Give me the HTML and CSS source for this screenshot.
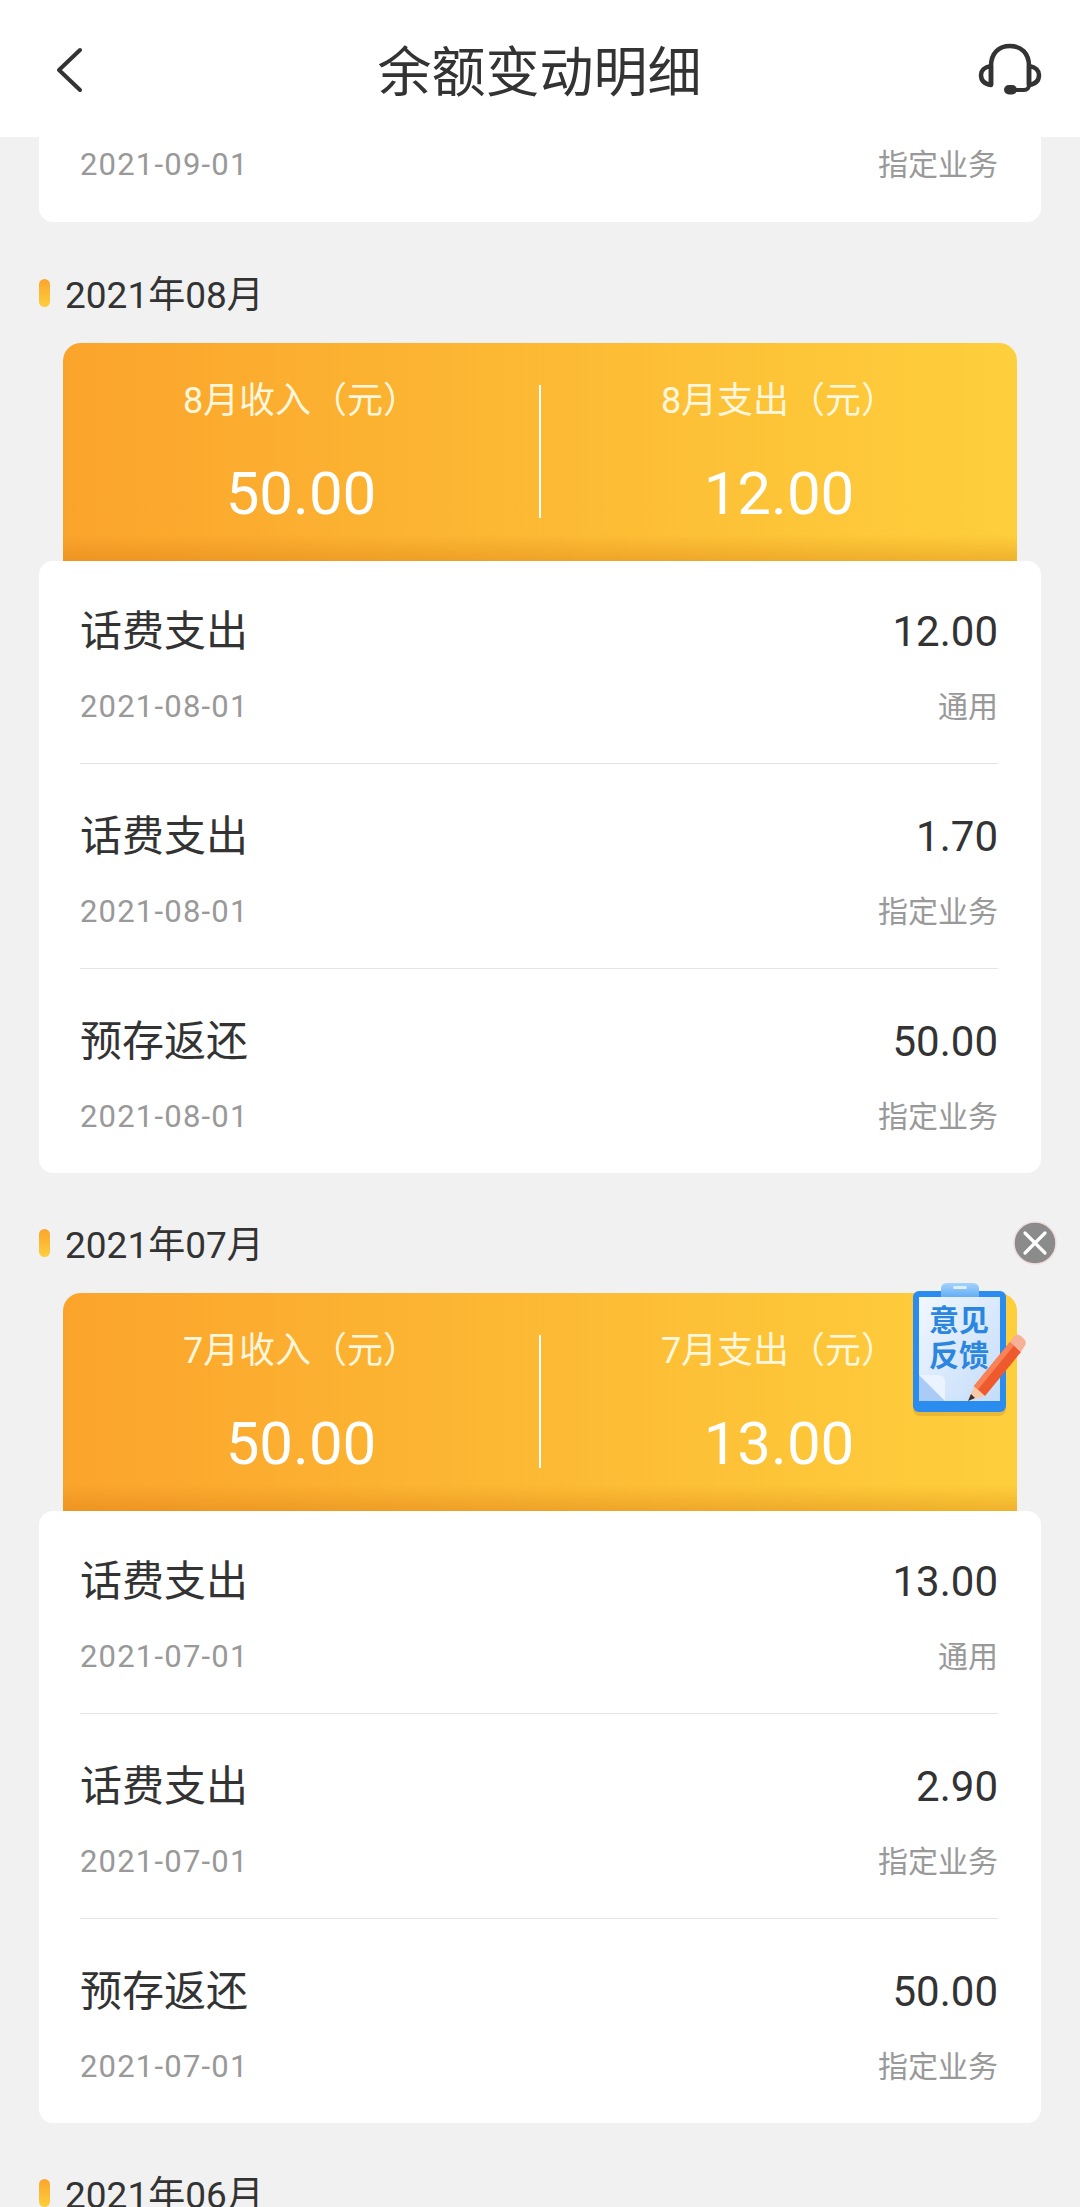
FILE: index.html
```html
<!DOCTYPE html>
<html lang="zh-CN">
<head>
    <meta charset="UTF-8">
    <meta name="viewport" content="width=device-width, initial-scale=1.0">
    <title>余额变动明细</title>
    <link rel="stylesheet" href="styles.css">
</head>
<body>

<!-- Top bar -->
<header class="top-bar">
    <svg class="back-icon" viewBox="0 0 30 46" width="30" height="46">
        <path d="M26 3 L5 23 L26 43" fill="none" stroke="#333" stroke-width="4" stroke-linecap="round" stroke-linejoin="round"/>
    </svg>
    <h1>余额变动明细</h1>
    <svg class="service-icon" viewBox="0 0 64 54" width="64" height="54">
        <path d="M13 42 V23 C13 10 21 3 32 3 C43 3 51 10 51 23 V42" fill="none" stroke="#333" stroke-width="4.5"/>
        <path d="M13 23 C6 24 3 28 3 32 C3 37 6 41 13 42 Z" fill="none" stroke="#333" stroke-width="4.5" stroke-linejoin="round"/>
        <path d="M51 23 C58 24 61 28 61 32 C61 37 58 41 51 42 Z" fill="none" stroke="#333" stroke-width="4.5" stroke-linejoin="round"/>
        <path d="M34 47 H46 C49 47 51 45 51 42" fill="none" stroke="#333" stroke-width="4"/>
        <rect x="26" y="42" width="13" height="9.5" rx="4.7" fill="#333"/>
    </svg>
</header>

<main class="list">

    <!-- Previous month, scrolled under the top bar -->
    <div class="card card-cut">
        <div class="row-foot">
            <span class="date">2021-09-01</span>
            <span class="tag">指定业务</span>
        </div>
    </div>

    <section class="month">
        <h2 class="month-title">2021年08月</h2>
        <div class="banner">
            <div class="banner-col">
                <p class="banner-label">8月收入（元）</p>
                <p class="banner-value">50.00</p>
            </div>
            <div class="banner-col">
                <p class="banner-label">8月支出（元）</p>
                <p class="banner-value">12.00</p>
            </div>
        </div>
        <div class="card">
            <div class="row">
                <div class="row-head"><span class="row-name">话费支出</span><span class="row-amount">12.00</span></div>
                <div class="row-foot"><span class="date">2021-08-01</span><span class="tag">通用</span></div>
            </div>
            <div class="row">
                <div class="row-head"><span class="row-name">话费支出</span><span class="row-amount">1.70</span></div>
                <div class="row-foot"><span class="date">2021-08-01</span><span class="tag">指定业务</span></div>
            </div>
            <div class="row">
                <div class="row-head"><span class="row-name">预存返还</span><span class="row-amount">50.00</span></div>
                <div class="row-foot"><span class="date">2021-08-01</span><span class="tag">指定业务</span></div>
            </div>
        </div>
    </section>

    <section class="month">
        <h2 class="month-title">2021年07月</h2>
        <div class="banner">
            <div class="banner-col">
                <p class="banner-label">7月收入（元）</p>
                <p class="banner-value">50.00</p>
            </div>
            <div class="banner-col">
                <p class="banner-label">7月支出（元）</p>
                <p class="banner-value">13.00</p>
            </div>
        </div>
        <div class="card">
            <div class="row">
                <div class="row-head"><span class="row-name">话费支出</span><span class="row-amount">13.00</span></div>
                <div class="row-foot"><span class="date">2021-07-01</span><span class="tag">通用</span></div>
            </div>
            <div class="row">
                <div class="row-head"><span class="row-name">话费支出</span><span class="row-amount">2.90</span></div>
                <div class="row-foot"><span class="date">2021-07-01</span><span class="tag">指定业务</span></div>
            </div>
            <div class="row">
                <div class="row-head"><span class="row-name">预存返还</span><span class="row-amount">50.00</span></div>
                <div class="row-foot"><span class="date">2021-07-01</span><span class="tag">指定业务</span></div>
            </div>
        </div>
    </section>

    <section class="month">
        <h2 class="month-title">2021年06月</h2>
    </section>
</main>

<!-- Floating feedback button -->
<svg class="feedback-close" viewBox="0 0 46 46" width="46" height="46">
    <circle cx="23" cy="23" r="21" fill="#8b8b8b" stroke="#f0dcdc" stroke-width="1.5"/>
    <path d="M13 13 L33 33 M33 13 L13 33" stroke="#fff" stroke-width="3.2" stroke-linecap="round"/>
</svg>

<svg class="feedback" viewBox="905 1278 125 142" width="125" height="142">
    <defs>
        <linearGradient id="paper" x1="0" y1="0" x2="1" y2="1">
            <stop offset="0" stop-color="#f1f7ff"/>
            <stop offset="1" stop-color="#c4dcf9"/>
        </linearGradient>
        <linearGradient id="clip" x1="0" y1="0" x2="0" y2="1">
            <stop offset="0" stop-color="#a5d3fb"/>
            <stop offset="1" stop-color="#62aef5"/>
        </linearGradient>
    </defs>
    <rect x="913" y="1294" width="93" height="122" rx="7" fill="#b98a30" opacity=".3"/>
    <rect x="913" y="1291" width="93" height="121" rx="6" fill="#2b8cf0"/>
    <path d="M941 1297 V1289 Q941 1283 947 1283 H973 Q979 1283 979 1289 V1297 Z" fill="url(#clip)"/>
    <rect x="953" y="1286" width="14" height="3" rx="1.5" fill="#dcefff"/>
    <rect x="919" y="1297" width="81" height="104" fill="url(#paper)"/>
    <path d="M919 1375 H938 Q945 1375 945 1382 V1401 H941 Z" fill="#eaf3ff"/>
    <path d="M919 1375 L945 1401 H919 Z" fill="#a9cbf6"/>
    <text x="929" y="1331" class="feedback-text">意见</text>
    <text x="929" y="1366" class="feedback-text">反馈</text>
    <path d="M968 1401 L974 1386 L985 1396 Z" fill="#f8c9a8"/>
    <path d="M968 1401 L971 1394 L975 1398 Z" fill="#333"/>
    <path d="M974 1386 L1010 1342 L1021 1352 L985 1396 Z" fill="#ee5a2e"/>
    <path d="M974 1386 L1010 1342 L1014 1345.600 L978 1389.600 Z" fill="#f98257"/>
    <path d="M1010 1342 L1014 1336 Q1017 1333 1021 1336 L1025 1340 Q1027 1344 1024 1347 L1021 1352 Z" fill="#f6b196"/>
</svg>

</body>
</html>
```

FILE: styles.css
```css
* {
    box-sizing: border-box;
}

html, body {
    margin: 0;
    height: 2207px;
    overflow: hidden;
}

body {
    position: relative;
    font-family: Roboto, "Noto Sans CJK SC", sans-serif;
    background-color: #f1f1f1;
    color: #333;
}

p, h1, h2 {
    margin: 0;
    font-weight: normal;
}

.top-bar {
    display: flex;
    justify-content: space-between;
    align-items: center;
    height: 137px;
    padding: 2px 38px 0 54px;
    background-color: white;
}

.top-bar h1 {
    font-size: 54px;
    line-height: 70px;
    margin-left: 17px;
    padding-top: 8px;
}

.back-icon {
    display: block;
}

.service-icon {
    display: block;
}

.list {
    padding: 0 39px;
}

.month {
    padding-top: 45px;
}

.card-cut + .month {
    padding-top: 46px;
}

.month-title {
    display: flex;
    align-items: center;
    height: 50px;
    padding-bottom: 3px;
    font-size: 37px;
}

.month-title::before {
    content: "";
    width: 11px;
    height: 28px;
    margin-top: 3px;
    margin-right: 15px;
    border-radius: 6px;
    background: linear-gradient(to bottom, #fba42c, #fecf3c);
}

.banner {
    display: flex;
    height: 218px;
    margin: 25px 24px 0;
    padding-top: 42px;
    border-radius: 18px 18px 0 0;
    background:
        linear-gradient(to bottom, rgba(205, 110, 10, 0) 88%, rgba(205, 110, 10, 0.3) 100%),
        linear-gradient(to right, #fba42c, #fecf3c);
}

.banner-col {
    flex: 1;
    height: 133px;
    text-align: center;
    color: #fff;
}

.banner-col:first-child {
    border-right: 2px solid #fff;
}

.banner-label {
    font-size: 36px;
    line-height: 32px;
    color: #fff7dc;
}

.banner-value {
    margin-top: 42px;
    font-size: 60px;
    line-height: 70px;
}

.card {
    padding: 0 43px 0 41px;
    border-radius: 14px;
    background-color: white;
}

.card-cut {
    padding-top: 7px;
    padding-bottom: 38px;
    border-radius: 0 0 14px 14px;
}

.row {
    height: 205px;
    padding-top: 43px;
    border-bottom: 1px solid #e4e4e4;
}

.row:first-child {
    height: 203px;
    padding-top: 41px;
}

.row:last-child {
    height: 204px;
    border-bottom: none;
}

.row-head {
    display: flex;
    justify-content: space-between;
    align-items: center;
    height: 60px;
}

.row-name {
    font-size: 42px;
    padding-bottom: 10px;
}

.row-amount {
    font-size: 42px;
    padding-bottom: 2px;
}

.row-foot {
    display: flex;
    justify-content: space-between;
    align-items: center;
    height: 40px;
    font-size: 30px;
    color: #999;
}

.row .row-foot {
    margin-top: 24px;
}

.date {
    font-size: 31px;
    letter-spacing: 1.2px;
}

.tag {
    padding-bottom: 5px;
}

.feedback-close {
    position: absolute;
    left: 1012px;
    top: 1220px;
}

.feedback {
    position: absolute;
    left: 905px;
    top: 1278px;
}

.feedback-text {
    font-family: "Noto Sans CJK SC", sans-serif;
    font-size: 30px;
    font-weight: 700;
    fill: #2b86e0;
}
```
